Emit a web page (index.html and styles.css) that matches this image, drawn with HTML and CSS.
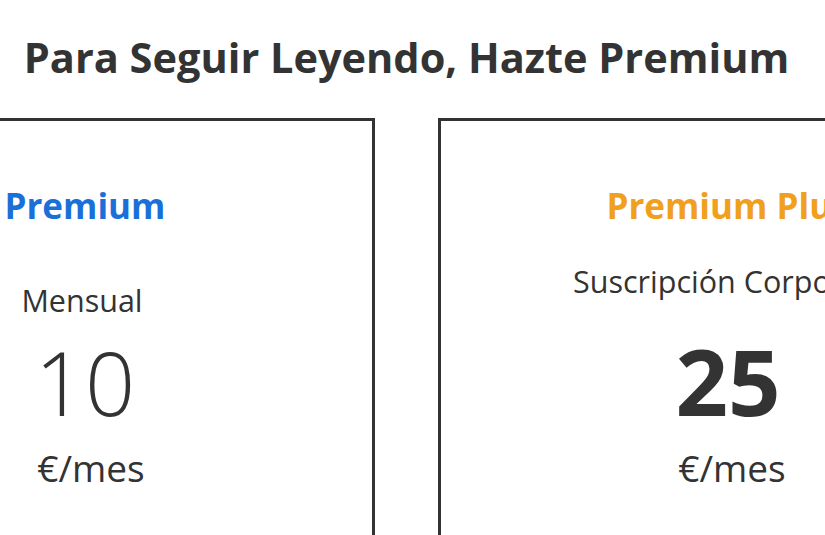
FILE: index.html
```html
<!DOCTYPE html>
<html lang="es">
<head>
<meta charset="utf-8">
<link rel="stylesheet" href="styles.css">
</head>
<body>
<main class="page">
  <h1 class="title">Para Seguir Leyendo, Hazte Premium</h1>
  <section class="plans">
    <article class="plan plan--basic">
      <h2 class="plan-name plan-name--blue">Premium</h2>
      <p class="plan-period">Mensual</p>
      <p class="plan-price plan-price--light">10</p>
      <p class="plan-unit">€/mes</p>
    </article>
    <article class="plan plan--plus">
      <h2 class="plan-name plan-name--orange">Premium Plus</h2>
      <p class="plan-period">Suscripción Corporativa</p>
      <p class="plan-price plan-price--bold">25</p>
      <p class="plan-unit">€/mes</p>
    </article>
  </section>
</main>
</body>
</html>
```

FILE: styles.css
```css
html, body {
  margin: 0;
  padding: 0;
  background: #ffffff;
  overflow: hidden;
}

body {
  font-family: "Open Sans", "Noto Sans", sans-serif;
  color: #333333;
  width: 825px;
  height: 535px;
}

.page {
  display: flex;
  flex-direction: column;
  align-items: center;
  padding-top: 29px;
}

.title {
  margin: 0 12px 0 0;
  font-size: 41.5px;
  font-weight: 700;
  line-height: 56px;
  white-space: nowrap;
}

.plans {
  margin-top: 33px;
  box-sizing: border-box;
  width: 825px;
  padding-right: 12px;
  display: flex;
  justify-content: center;
  gap: 63px;
}

.plan {
  flex: 0 0 580px;
  height: 480px;
  box-sizing: border-box;
  border: 3px solid #333333;
  display: flex;
  flex-direction: column;
  align-items: center;
  text-align: center;
}

.plan-name {
  margin: 63px 0 0;
  font-size: 35px;
  font-weight: 700;
  line-height: 44px;
  white-space: nowrap;
}

.plan-name--blue { color: #1a70d8; }
.plan-name--orange { color: #f0a01c; }

.plan-period {
  margin: 0;
  font-size: 30.5px;
  line-height: 40px;
  white-space: nowrap;
}

.plan--basic .plan-period { margin-top: 52px; padding-right: 6px; }
.plan--plus .plan-period { margin-top: 33px; padding-left: 28px; }

.plan-price {
  margin: 0;
  line-height: 100px;
}

.plan-price--light {
  margin-top: 12px;
  font-size: 88px;
  font-weight: 300;
}

.plan-price--bold {
  margin-top: 30px;
  font-size: 92px;
  font-weight: 700;
}

.plan-unit {
  margin: 11px 0 0;
  font-size: 37px;
  line-height: 50px;
}

.plan--basic .plan-unit { padding-left: 12px; }
.plan--plus .plan-unit { margin-top: 12px; padding-left: 8px; }
```
